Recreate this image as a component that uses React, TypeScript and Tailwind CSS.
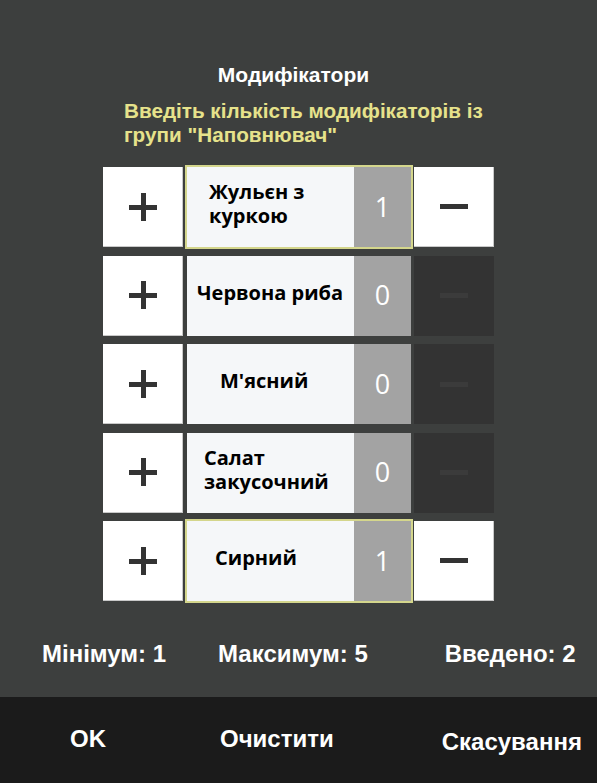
import React from "react";

type Row = { name: string; count: number; pad: string };

const rows: Row[] = [
  { name: "Жульєн з куркою", count: 1, pad: "pl-[22px] w-[130px]" },
  { name: "Червона риба", count: 0, pad: "pl-[10px]" },
  { name: "М'ясний", count: 0, pad: "pl-[33px]" },
  { name: "Салат закусочний", count: 0, pad: "pl-[17px] w-[150px]" },
  { name: "Сирний", count: 1, pad: "pl-[28px]" },
];

function PlusIcon() {
  return (
    <div className="relative w-[28px] h-[28px]">
      <div className="absolute left-0 top-[12px] w-[28px] h-[5px] bg-[#333333]" />
      <div className="absolute left-[12px] top-0 w-[5px] h-[28px] bg-[#333333]" />
    </div>
  );
}

function MinusIcon({ color }: { color: string }) {
  return <div className={`w-[28px] h-[5px] ${color}`} />;
}

export default function App() {
  const sans = { fontFamily: '"Liberation Sans", Arial, sans-serif' };
  const open = { fontFamily: '"Open Sans", "Noto Sans", sans-serif' };
  return (
    <div className="w-[597px] h-[783px] bg-[#3d3f3e] flex flex-col overflow-hidden" style={sans}>
      <div className="flex-1 flex flex-col">
        <div className="pt-[63px] text-center text-white font-bold text-[21px] leading-[24px]">
          <span className="inline-block translate-x-[-5px]">Модифікатори</span>
        </div>
        <div className="mt-[12px] ml-[124px] w-[380px] text-[#e6e28b] font-bold text-[20.7px] leading-[24px]">
          Введіть кількість модифікаторів із групи "Наповнювач"
        </div>
        <div className="mt-[20px] ml-[103px] flex flex-col gap-[8.5px]">
          {rows.map((r, i) => {
            const selected = r.count > 0;
            return (
              <div key={i} className="flex h-[80px]">
                <div className="w-[80px] h-[80px] bg-white border-r border-b border-[#c9c9c9] flex items-center justify-center">
                  <PlusIcon />
                </div>
                <div
                  className={`ml-[4px] w-[224px] h-[80px] flex bg-[#f5f7f9] ${
                    selected ? "ring-2 ring-[#d4d68c]" : ""
                  }`}
                >
                  <div className="flex-1 flex items-center pb-[6px]">
                    <div className={`${r.pad} text-black font-bold text-[20px] leading-[24px]`} style={open}>
                      {r.name}
                    </div>
                  </div>
                  <div
                    className="w-[57px] h-[80px] bg-[#a3a3a3] flex items-center justify-center text-white text-[27px] font-normal"
                    style={open}
                  >
                    {r.count}
                  </div>
                </div>
                <div
                  className={`ml-[3px] w-[80px] h-[80px] flex items-center justify-center ${
                    selected ? "bg-white border-r border-b border-[#c9c9c9]" : "bg-[#333333]"
                  }`}
                >
                  <MinusIcon color={selected ? "bg-[#333333]" : "bg-[#3b3b3b]"} />
                </div>
              </div>
            );
          })}
        </div>
        <div className="mt-[39px] flex items-center text-white font-bold text-[24px] leading-[28px]">
          <span className="ml-[42px]">Мінімум: 1</span>
          <span className="ml-[52px]">Максимум: 5</span>
          <span className="ml-[77px]">Введено: 2</span>
        </div>
      </div>
      <div className="h-[86px] bg-[#1b1b1b] flex items-center text-white font-bold text-[24px] leading-[28px]">
        <span className="ml-[70px] mt-[-2px]">OK</span>
        <span className="ml-[114px] mt-[-2px]">Очистити</span>
        <span className="ml-[108px] mt-[3px]">Скасування</span>
      </div>
    </div>
  );
}
